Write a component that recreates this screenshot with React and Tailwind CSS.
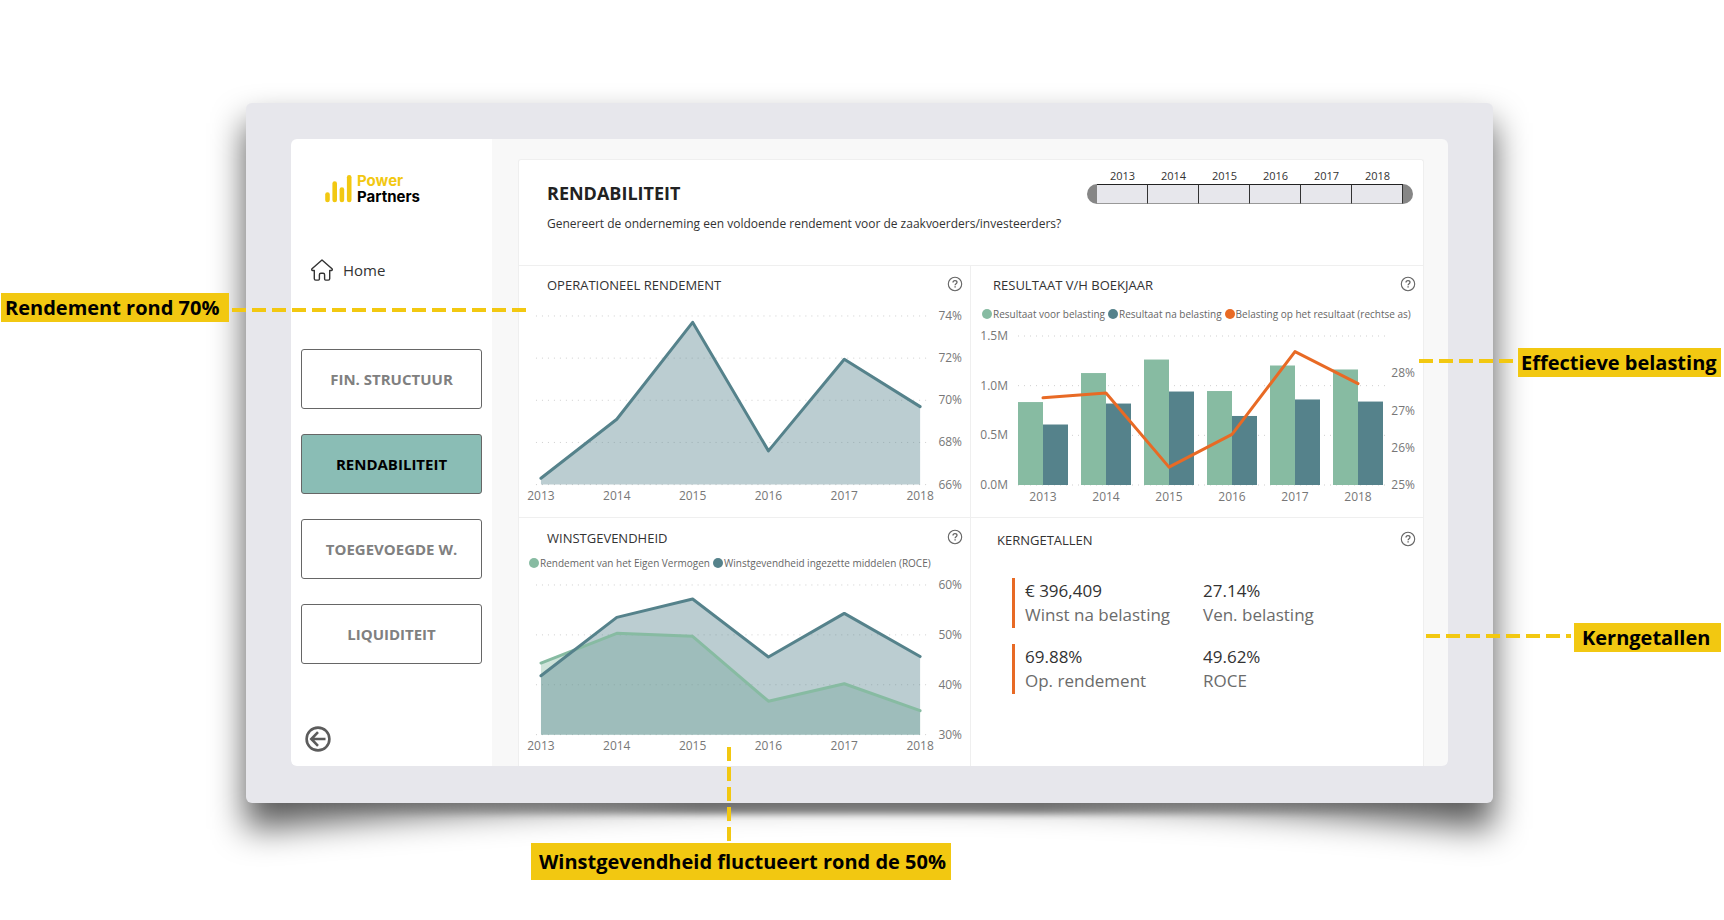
import React from "react";

const YEARS = [2013, 2014, 2015, 2016, 2017, 2018];

const GREEN = "#87bba2";
const TEAL = "#55828b";
const ORANGE = "#e86a25";

const menuItems = [
  { label: "FIN. STRUCTUUR", active: false },
  { label: "RENDABILITEIT", active: true },
  { label: "TOEGEVOEGDE W.", active: false },
  { label: "LIQUIDITEIT", active: false },
];

const kpis = [
  { value: "€ 396,409", label: "Winst na belasting", marked: true },
  { value: "27.14%", label: "Ven. belasting", marked: false },
  { value: "69.88%", label: "Op. rendement", marked: true },
  { value: "49.62%", label: "ROCE", marked: false },
];

const margins = [66.3, 69.1, 73.7, 67.6, 71.95, 69.7];
const equityReturn = [44.35, 50.3, 49.7, 36.7, 40.2, 34.8];
const roce = [41.8, 53.5, 57.2, 45.55, 54.3, 45.65];
const beforeTax = [0.835, 1.127, 1.263, 0.946, 1.203, 1.163];
const afterTax = [0.609, 0.82, 0.941, 0.695, 0.861, 0.84];
const taxRate = [27.34, 27.47, 25.48, 26.36, 28.58, 27.72];

const scale = (min, max, bottom, top) => (v) =>
  bottom - ((v - min) / (max - min)) * (bottom - top);

const Logo = () => (
  <div className="flex items-center gap-1">
    <svg width="28" height="30" viewBox="0 0 28 30" aria-hidden="true">
      <g stroke="#f2c811" strokeWidth="4.600" strokeLinecap="round">
        <path d="M2.500 20.500v5.500" />
        <path d="M9.700 9.500v16.500" />
        <path d="M16.900 15.500v10.500" />
        <path d="M24.200 3.300v22.700" />
      </g>
    </svg>
    <div className="font-[Inter,sans-serif] text-[15px] leading-4 font-bold">
      <div className="text-[#f2c811]">Power</div>
      <div className="text-black">Partners</div>
    </div>
  </div>
);

const HomeIcon = () => (
  <svg
    width="22"
    height="22"
    viewBox="0 0 22 22"
    fill="none"
    stroke="#333"
    strokeWidth="1.400"
    strokeLinejoin="round"
    strokeLinecap="round"
    aria-hidden="true"
  >
    <path d="M11 0.900L1 9.800c-.6.600-.2 1.700.7 1.700H3.300v8.200c0 .8.600 1.400 1.400 1.400h2.700c.6 0 1-.4 1-1v-4.300c0-1 .7-1.600 1.500-1.600h2.200c.8 0 1.500.6 1.500 1.600v4.300c0 .6.400 1 1 1h2.700c.8 0 1.400-.6 1.400-1.400v-8.200h1.600c.9 0 1.300-1.100.7-1.700z" />
  </svg>
);

const BackIcon = () => (
  <svg
    width="26"
    height="26"
    viewBox="0 0 26 26"
    fill="none"
    stroke="#5c5c5c"
    strokeWidth="2.600"
    aria-hidden="true"
  >
    <circle cx="13" cy="13" r="11.400" />
    <path d="M20.500 13H6.500M13 6.200L6.300 13l6.700 6.800" />
  </svg>
);

const HelpButton = () => (
  <button type="button" aria-label="Help" className="mb-1 h-4 w-4">
    <svg width="16" height="16" viewBox="0 0 16 16" fill="none" stroke="#666">
      <circle cx="8" cy="8" r="6.700" strokeWidth="1.100" />
      <path
        d="M6 6.500c0-1.200.9-1.900 2-1.900s2 .7 2 1.700c0 1.400-1.900 1.400-1.900 2.900"
        strokeWidth="1.300"
      />
      <path d="M8.100 10.200v1.400" strokeWidth="1.400" />
    </svg>
  </button>
);

const Sidebar = () => (
  <aside className="flex w-[201px] shrink-0 flex-col bg-white px-[10px] pb-[14px]">
    <div className="mt-[34px] ml-6">
      <Logo />
    </div>
    <a
      href="#home"
      className="mt-[49px] ml-[10px] flex h-8 items-center gap-[10px] text-[15px] text-[#333]"
    >
      <HomeIcon />
      Home
    </a>
    <nav className="mt-[63px] flex flex-col gap-[25px]">
      {menuItems.map((item) => (
        <button
          key={item.label}
          type="button"
          className={`h-[60px] rounded-[3px] border border-[#666] text-[15px] font-bold ${
            item.active ? "bg-[#8abdb5] text-black" : "bg-white text-[#808080]"
          }`}
        >
          {item.label}
        </button>
      ))}
    </nav>
    <button
      type="button"
      aria-label="Terug"
      className="mt-auto ml-1 h-[26px] w-[26px]"
    >
      <BackIcon />
    </button>
  </aside>
);

const YearSlicer = () => (
  <div className="flex items-end">
    <span className="h-5 w-[10px] rounded-l-full bg-[#868686]" />
    {YEARS.map((year) => (
      <button
        key={year}
        type="button"
        className="flex w-[51px] flex-col items-stretch text-[11px] leading-4 text-[#333]"
      >
        {year}
        <span className="h-5 border-t border-r border-b border-t-[#222] border-r-[#333] border-b-[#999] bg-[#e7e7ec]" />
      </button>
    ))}
    <span className="h-5 w-[10px] rounded-r-full bg-[#868686]" />
  </div>
);

const Legend = ({ items }) => (
  <ul className="flex items-center gap-[3px] text-[10px] leading-4 whitespace-nowrap text-[#666]">
    {items.map((item) => (
      <li key={item.label} className="flex items-center gap-px">
        <span
          className="h-[10px] w-[10px] rounded-full"
          style={{ backgroundColor: item.color }}
        />
        {item.label}
      </li>
    ))}
  </ul>
);

const GridLines = ({ ys, x1, x2 }) => (
  <g stroke="#cfcfcf" strokeDasharray="1 5">
    {ys.map((y) => (
      <line key={y} x1={x1} x2={x2} y1={y} y2={y} />
    ))}
  </g>
);

const AreaChart = ({ height, min, max, ticks, top, bottom, series }) => {
  const y = scale(min, max, bottom, top);
  const x = (i) => 22 + i * 76;
  const line = (values) => values.map((v, i) => `${x(i)},${y(v)}`).join(" ");

  return (
    <svg
      viewBox={`0 0 452 ${height}`}
      className="block w-full text-[12px]"
      fill="#777"
    >
      <GridLines ys={ticks.map(y)} x1={17} x2={413} />
      {series.map((s) => (
        <polygon
          key={s.color}
          points={`${x(0)},${bottom} ${line(s.values)} ${x(5)},${bottom}`}
          fill={s.color}
          fillOpacity="0.4"
        />
      ))}
      {series.map((s) => (
        <polyline
          key={s.color}
          points={line(s.values)}
          fill="none"
          stroke={s.color}
          strokeWidth="3"
          strokeLinecap="round"
          strokeLinejoin="round"
        />
      ))}
      {ticks.map((t) => (
        <text key={t} x="444" y={y(t) + 4} textAnchor="end">
          {t}%
        </text>
      ))}
      {YEARS.map((year, i) => (
        <text key={year} x={x(i)} y={bottom + 15} textAnchor="middle">
          {year}
        </text>
      ))}
    </svg>
  );
};

const ResultChart = () => {
  const bottom = 160;
  const amount = scale(0, 1.5, bottom, 11);
  const rate = scale(25, 29, bottom, 11);
  const x = (i) => 72 + i * 63;

  return (
    <svg viewBox="0 0 452 191" className="block w-full text-[12px]" fill="#777">
      <GridLines ys={[0, 0.5, 1, 1.5].map(amount)} x1={47} x2={417} />
      {YEARS.map((year, i) => (
        <g key={year}>
          <rect
            x={x(i) - 25}
            y={amount(beforeTax[i])}
            width="25"
            height={bottom - amount(beforeTax[i])}
            fill={GREEN}
          />
          <rect
            x={x(i)}
            y={amount(afterTax[i])}
            width="25"
            height={bottom - amount(afterTax[i])}
            fill={TEAL}
          />
          <text x={x(i)} y={bottom + 16} textAnchor="middle">
            {year}
          </text>
        </g>
      ))}
      <polyline
        points={taxRate.map((v, i) => `${x(i)},${rate(v)}`).join(" ")}
        fill="none"
        stroke={ORANGE}
        strokeWidth="3"
        strokeLinecap="round"
        strokeLinejoin="round"
      />
      {["0.0M", "0.5M", "1.0M", "1.5M"].map((t) => (
        <text key={t} x="37" y={amount(parseFloat(t)) + 4} textAnchor="end">
          {t}
        </text>
      ))}
      {[25, 26, 27, 28].map((t) => (
        <text key={t} x="444" y={rate(t) + 4} textAnchor="end">
          {t}%
        </text>
      ))}
    </svg>
  );
};

const Card = ({ title, className = "", titleClass = "pl-7", children }) => (
  <section className={`border-t border-[#efefef] ${className}`}>
    <header
      className={`flex h-10 items-center justify-between pr-[7px] ${titleClass}`}
    >
      <h2 className="text-[13px] text-[#333]">{title}</h2>
      <HelpButton />
    </header>
    {children}
  </section>
);

const Kpi = ({ value, label, marked }) => (
  <div
    className={`flex h-[50px] flex-col justify-center border-l-[3px] pl-[10px] text-[17px] leading-6 ${
      marked ? "border-[#e86a25]" : "border-transparent"
    }`}
  >
    <dd className="order-1 text-[#333]">{value}</dd>
    <dt className="order-2 text-[#6b6b6b]">{label}</dt>
  </div>
);

const Report = () => (
  <main className="min-w-0 flex-1 bg-[#f8f8f8] pt-5 pr-6 pl-[26px]">
    <div className="h-full rounded-t-[3px] border-x border-t border-[#efefef] bg-white">
      <header className="flex h-[105px] items-start justify-between pr-[10px] pl-7">
        <div>
          <h1 className="mt-[21px] text-lg leading-6 font-bold text-[#222]">
            RENDABILITEIT
          </h1>
          <p className="mt-[9px] text-xs leading-5 whitespace-nowrap text-[#333]">
            Genereert de onderneming een voldoende rendement voor de
            zaakvoerders/investeerders?
          </p>
        </div>
        <div className="mt-2">
          <YearSlicer />
        </div>
      </header>
      <div className="grid grid-cols-2">
        <Card title="OPERATIONEEL RENDEMENT" className="border-r">
          <AreaChart
            height={211}
            min={66}
            max={74}
            ticks={[66, 68, 70, 72, 74]}
            top={10}
            bottom={179}
            series={[{ color: TEAL, values: margins }]}
          />
        </Card>
        <Card title="RESULTAAT V/H BOEKJAAR" titleClass="pl-[22px]">
          <div className="mb-[3px] pl-[11px]">
            <Legend
              items={[
                { label: "Resultaat voor belasting", color: GREEN },
                { label: "Resultaat na belasting", color: TEAL },
                {
                  label: "Belasting op het resultaat (rechtse as)",
                  color: ORANGE,
                },
              ]}
            />
          </div>
          <ResultChart />
        </Card>
        <Card title="WINSTGEVENDHEID" className="border-r pt-px">
          <div className="-mt-1 mb-1 pl-[10px]">
            <Legend
              items={[
                { label: "Rendement van het Eigen Vermogen", color: GREEN },
                {
                  label: "Winstgevendheid ingezette middelen (ROCE)",
                  color: TEAL,
                },
              ]}
            />
          </div>
          <AreaChart
            height={192}
            min={30}
            max={60}
            ticks={[30, 40, 50, 60]}
            top={10}
            bottom={160}
            series={[
              { color: GREEN, values: equityReturn },
              { color: TEAL, values: roce },
            ]}
          />
        </Card>
        <Card
          title="KERNGETALLEN"
          className="pt-px"
          titleClass="pt-1 pl-[26px]"
        >
          <dl className="mt-[19px] ml-[41px] grid grid-cols-[178px_1fr] gap-y-4">
            {kpis.map((kpi) => (
              <Kpi key={kpi.label} {...kpi} />
            ))}
          </dl>
        </Card>
      </div>
    </div>
  </main>
);

// Page-curl shadow: deep at the lower corners, thin in the middle
const FrameShadow = () => (
  <svg
    className="absolute inset-0 h-full w-full overflow-visible"
    viewBox="0 0 1247 700"
    preserveAspectRatio="none"
    aria-hidden="true"
  >
    <defs>
      <filter id="soft" x="-10%" y="-20%" width="120%" height="140%">
        <feGaussianBlur stdDeviation="17" />
      </filter>
      <filter id="thin" x="-5%" y="-5%" width="110%" height="110%">
        <feGaussianBlur stdDeviation="3" />
      </filter>
      <linearGradient id="middle">
        <stop offset="0" stopColor="#000" stopOpacity="0" />
        <stop offset="0.35" stopColor="#000" stopOpacity="0.42" />
        <stop offset="0.65" stopColor="#000" stopOpacity="0.42" />
        <stop offset="1" stopColor="#000" stopOpacity="0" />
      </linearGradient>
    </defs>
    <path
      d="M0 20H1247V726Q623 660 0 726Z"
      fill="#000"
      fillOpacity="0.66"
      filter="url(#soft)"
    />
    <rect
      x="60"
      y="600"
      width="1127"
      height="111"
      fill="url(#middle)"
      filter="url(#thin)"
    />
  </svg>
);

const Label = ({ className, children }) => (
  <span
    className={`flex items-center bg-[#f2c811] text-xl font-bold whitespace-nowrap text-black ${className}`}
  >
    {children}
  </span>
);

const Dashes = ({ className }) => (
  <span
    className={`h-1 bg-[repeating-linear-gradient(90deg,#f2c811_0_14px,transparent_14px_20px)] ${className}`}
  />
);

const App = () => {
  return (
    <div className="relative min-h-screen bg-white pt-[103px] pr-[231px] pb-[117px] pl-[246px] font-['Open_Sans','Noto_Sans',sans-serif]">
      <div className="relative">
        <FrameShadow />
        <div className="relative rounded-md bg-[#e7e7ec] px-[45px] pt-9 pb-[37px]">
          <div className="flex overflow-hidden rounded-md">
            <Sidebar />
            <Report />
          </div>
        </div>
      </div>

      {/* Callouts */}
      <div className="absolute top-[293px] left-px flex items-center gap-[3px]">
        <Label className="h-[29px] w-[228px] pl-1">Rendement rond 70%</Label>
        <Dashes className="mt-1 w-[295px]" />
      </div>
      <div className="absolute top-[348px] right-[3px] flex items-center gap-[5px]">
        <Dashes className="mb-1 w-[94px]" />
        <Label className="h-[29px] w-[203px] pl-[3px]">
          Effectieve belasting
        </Label>
      </div>
      <div className="absolute top-[623px] right-[3px] flex items-center gap-[3px]">
        <Dashes className="mb-1 w-[145px]" />
        <Label className="h-[29px] w-[147px] pl-2">Kerngetallen</Label>
      </div>
      <div className="absolute top-[747px] left-[531px] flex flex-col">
        <span className="ml-[196px] h-24 w-1 bg-[repeating-linear-gradient(180deg,#f2c811_0_14px,transparent_14px_20px)]" />
        <Label className="h-[37px] w-[420px] pl-2">
          Winstgevendheid fluctueert rond de 50%
        </Label>
      </div>
    </div>
  );
};

export default App;
